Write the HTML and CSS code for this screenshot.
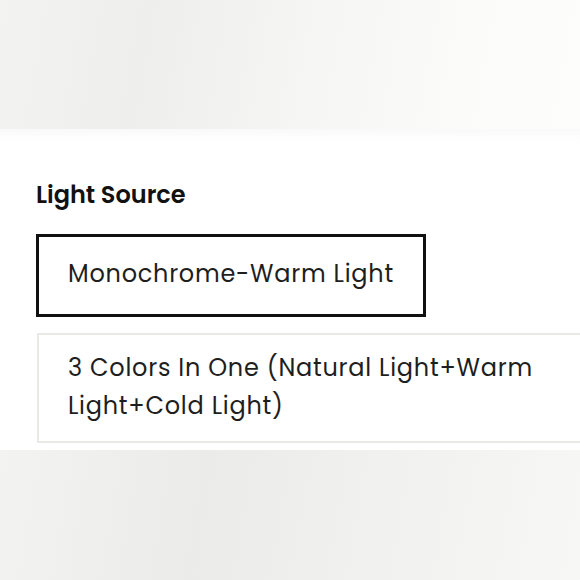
FILE: index.html
```html
<!DOCTYPE html>
<html>
<head>
<meta charset="utf-8">
<link rel="stylesheet" href="styles.css">
</head>
<body>
<div class="top"></div>
<section class="panel">
  <h2 class="label">Light Source</h2>
  <div class="options">
    <div class="option selected">Monochrome-Warm Light</div>
    <div class="option">3 Colors In One (Natural Light+Warm Light+Cold Light)</div>
  </div>
</section>
<div class="bottom"></div>
</body>
</html>
```
FILE: styles.css
```css
html, body {
  margin: 0;
  padding: 0;
  width: 580px;
  height: 580px;
  overflow: hidden;
  background: #f4f4f3;
  font-family: "Poppins", "Inter", "Noto Sans", sans-serif;
  color: #1a1a1a;
}
.top {
  height: 129px;
  background: linear-gradient(100deg, #f3f3f2 0%, #eeeeed 25%, #f6f6f5 55%, #fcfcfb 85%, #fdfdfc 100%);
}
.bottom {
  height: 130px;
  background: linear-gradient(100deg, #f3f3f2 0%, #ebebea 35%, #f0f0ef 60%, #f7f7f5 100%);
}
.panel {
  height: 321px;
  box-sizing: border-box;
  background: #fff;
  box-shadow: inset 0 14px 14px -10px rgba(0,0,0,0.035);
  padding: 51px 0 0 36px;
  overflow: hidden;
}
.label {
  margin: 0;
  font-size: 24px;
  font-weight: 600;
  line-height: 30px;
  letter-spacing: 0;
  color: #111;
}
.options {
  margin-top: 24px;
  display: flex;
  flex-direction: column;
  gap: 16px;
}
.option {
  box-sizing: border-box;
  font-size: 24px;
  line-height: 38px;
  font-weight: 400;
  letter-spacing: 0.75px;
  color: #1e1e1e;
  padding: 14px 20px 16px 29px;
  border: 2px solid #e9e9e5;
  width: 560px;
  margin-left: 1px;
}
.option.selected {
  width: 390px;
  margin-left: 0;
  border: 3px solid #111;
  padding: 18px 20px 21px 29px;
}
```
